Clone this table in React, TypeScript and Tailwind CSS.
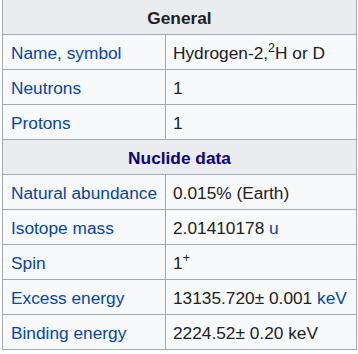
import React from 'react';

const link = 'text-[#0645ad]';

const Row: React.FC<{ label: string; children: React.ReactNode }> = ({ label, children }) => (
  <div className="flex h-[35px] border-b border-[#a2a9b1] bg-[#f8f9fa]">
    <div className={`w-[163px] shrink-0 border-r border-[#a2a9b1] pl-[8px] pt-[3px] flex items-center ${link}`}>{label}</div>
    <div className="pl-[7px] pt-[3px] flex items-center text-[#202122]">{children}</div>
  </div>
);

const Header: React.FC<{ children: React.ReactNode; className?: string }> = ({ children, className }) => (
  <div className={`h-[35px] border-b border-[#a2a9b1] bg-[#eaecf0] pt-[3px] flex items-center justify-center font-bold ${className ?? ''}`}>
    {children}
  </div>
);

const App: React.FC = () => {
  return (
    <div className="w-[358px] h-[354px] bg-white" style={{ fontFamily: '"Liberation Sans", Arial, sans-serif' }}>
      <div className="ml-[2px] w-[355px] border-l border-r border-[#a2a9b1] text-[17.3px] leading-none">
        <Header className="text-[#202122]">General</Header>
        <Row label="Name, symbol">
          <span>
            Hydrogen-2,<sup className="text-[12.5px] -top-[7px]">2</sup>H or D
          </span>
        </Row>
        <Row label="Neutrons">1</Row>
        <Row label="Protons">1</Row>
        <Header className="text-[#0b0080]">Nuclide data</Header>
        <Row label="Natural abundance">0.015% (Earth)</Row>
        <Row label="Isotope mass">
          <span>
            2.01410178 <span className={link}>u</span>
          </span>
        </Row>
        <Row label="Spin">
          <span>
            1<sup className="text-[12.5px] -top-[7px]">+</sup>
          </span>
        </Row>
        <Row label="Excess energy">
          <span>
            13135.720± 0.001 <span className={link}>keV</span>
          </span>
        </Row>
        <Row label="Binding energy">2224.52± 0.20 keV</Row>
      </div>
    </div>
  );
};

export default App;
